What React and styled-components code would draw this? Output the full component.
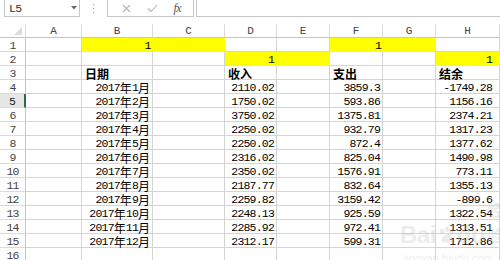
import React from 'react';
import styled, { createGlobalStyle } from 'styled-components';

const Global = createGlobalStyle`
  html, body { margin: 0; padding: 0; background: #fff; }
  body {
    width: 500px; height: 260px; overflow: hidden;
    font-family: "Liberation Mono", "Noto Sans CJK SC", monospace;
  }
`;

const Page = styled.div`
  position: relative;
  width: 500px;
  height: 260px;
  overflow: hidden;
  background: #fff;
`;

const FormulaBar = styled.div`
  display: flex;
  align-items: stretch;
  height: 17px;
`;

const NameBox = styled.div`
  box-sizing: border-box;
  margin-left: 4px;
  width: 76px;
  border: 1px solid #c6c6c6;
  border-top: none;
  display: flex;
  align-items: center;
  justify-content: space-between;
  padding: 0 2px 0 4px;
  font-size: 11.5px;
  letter-spacing: -0.6px;
  color: #333;
`;

const Grip = styled.div`
  width: 27px;
  display: flex;
  align-items: center;
  justify-content: center;
`;

const FuncBox = styled.div`
  box-sizing: border-box;
  width: 87px;
  border: 1px solid #c6c6c6;
  border-top: none;
  display: flex;
  align-items: center;
  justify-content: space-around;
  padding: 0 4px 0 6px;
`;

const Fx = styled.span`
  font-family: "Liberation Serif", serif;
  font-style: italic;
  font-size: 12px;
  color: #555;
  letter-spacing: -0.5px;
`;

const FormulaInput = styled.div`
  box-sizing: border-box;
  flex: 1;
  margin-left: 2px;
  border: 1px solid #c6c6c6;
  border-top: none;
  border-right: none;
`;

const Sheet = styled.div`
  margin-top: 7px;
  display: grid;
  grid-template-columns: 26px 56px 71px 72px 52px 53px 53px 53px 64px;
  grid-auto-rows: 14px;
`;

const ColHead = styled.div`
  box-sizing: border-box;
  border-right: 1px solid #dadada;
  border-bottom: 1px solid #c4c4c4;
  display: flex;
  align-items: center;
  justify-content: center;
  font-size: 11px;
  color: #444;
  padding-top: 1px;
`;

const Corner = styled(ColHead)`
  justify-content: flex-end;
  align-items: flex-end;
  padding: 0 3px 2px 0;
`;

const RowHead = styled.div`
  box-sizing: border-box;
  border-right: ${p => (p.$active ? '2px solid #217346' : '1px solid #c4c4c4')};
  border-bottom: 1px solid #dadada;
  background: ${p => (p.$active ? '#e6e6e6' : '#fff')};
  display: flex;
  align-items: center;
  justify-content: center;
  font-size: 11.5px;
  letter-spacing: -0.8px;
  color: ${p => (p.$active ? '#222' : '#444')};
  padding-top: 2px;
`;

const Cell = styled.div`
  box-sizing: border-box;
  grid-column: span ${p => p.$span || 1};
  border-right: 1px solid ${p => p.$fill || '#d4d4d4'};
  border-bottom: 1px solid ${p => p.$fill || '#d4d4d4'};
  background: ${p => p.$fill || '#fff'};
  display: flex;
  align-items: center;
  justify-content: ${p =>
    p.$align === 'right' ? 'flex-end' : p.$align === 'center' ? 'center' : 'flex-start'};
  padding: 2px ${p => p.$pr ?? 2}px 0 3px;
  font-size: 11.5px;
  letter-spacing: -0.8px;
  font-weight: ${p => (p.$bold ? 700 : 400)};
  color: #000;
  white-space: nowrap;
  line-height: 12px;
`;

const Han = styled.span`
  font-family: "Noto Sans CJK SC", sans-serif;
  font-size: 12px;
  letter-spacing: 0;
  line-height: 12px;
`;

const Watermark = styled.div`
  position: absolute;
  left: 400px;
  top: 196px;
  color: rgba(170, 170, 170, 0.22);
  font-family: "Liberation Sans", sans-serif;
  pointer-events: none;
`;

const WmTop = styled.div`
  display: flex;
  align-items: flex-end;
  font-size: 24px;
  font-weight: 700;
  line-height: 26px;
  letter-spacing: -0.5px;
`;

const WmHan = styled.span`
  font-family: "Noto Sans CJK SC", sans-serif;
  font-size: 16px;
  font-weight: 700;
  margin-left: 2px;
`;

const WmUrl = styled.div`
  font-size: 11px;
  margin-top: 4px;
  margin-left: 4px;
`;

const withHan = text =>
  String(text)
    .split(/([\u4e00-\u9fff]+)/)
    .filter(Boolean)
    .map((part, i) =>
      /[\u4e00-\u9fff]/.test(part) ? <Han key={i}>{part}</Han> : <span key={i}>{part}</span>
    );

const Y = '#ffff00';

const income = ['2110.02', '1750.02', '3750.02', '2250.02', '2250.02', '2316.02', '2350.02', '2187.77', '2259.82', '2248.13', '2285.92', '2312.17'];
const expense = ['3859.3', '593.86', '1375.81', '932.79', '872.4', '825.04', '1576.91', '832.64', '3159.42', '925.59', '972.41', '599.31'];
const balance = ['-1749.28', '1156.16', '2374.21', '1317.23', '1377.62', '1490.98', '773.11', '1355.13', '-899.6', '1322.54', '1313.51', '1712.86'];

const E = {};
const rows = [
  [E, { v: '1', align: 'center', fill: Y, span: 2, pr: 14 }, E, E, { v: '1', align: 'center', fill: Y, span: 2, pr: 12 }, { pr: 7 }],
  [E, E, E, { v: '1', align: 'right', fill: Y }, { fill: Y }, E, E, { v: '1', align: 'right', fill: Y, pr: 7 }],
  [E, { v: '日期', bold: true }, E, { v: '收入', bold: true }, E, { v: '支出', bold: true }, E, { v: '结余', bold: true }],
  ...income.map((inc, i) => [
    E,
    { v: `2017年${i + 1}月`, align: 'right' },
    E,
    { v: inc, align: 'right' },
    E,
    { v: expense[i], align: 'right' },
    E,
    { v: balance[i], align: 'right', pr: 7 },
  ]),
  [E, E, E, E, E, E, E, E],
];

const cols = ['A', 'B', 'C', 'D', 'E', 'F', 'G', 'H'];

export default function App() {
  return (
    <Page>
      <Global />
      <FormulaBar>
        <NameBox>
          <span>L5</span>
          <svg width="6" height="4" viewBox="0 0 6 4">
            <path d="M0 0 L6 0 L3 3.5 Z" fill="#666" />
          </svg>
        </NameBox>
        <Grip>
          <svg width="2" height="10" viewBox="0 0 2 10">
            <rect x="0" y="0" width="1.2" height="1.2" fill="#aaa" />
            <rect x="0" y="4" width="1.2" height="1.2" fill="#aaa" />
            <rect x="0" y="8" width="1.2" height="1.2" fill="#aaa" />
          </svg>
        </Grip>
        <FuncBox>
          <svg width="9" height="9" viewBox="0 0 9 9">
            <path d="M1 1 L8 8 M8 1 L1 8" stroke="#b4b4b4" strokeWidth="1.1" fill="none" />
          </svg>
          <svg width="11" height="9" viewBox="0 0 11 9">
            <path d="M1 4.5 L4 7.5 L10 1" stroke="#b4b4b4" strokeWidth="1.1" fill="none" />
          </svg>
          <Fx>fx</Fx>
        </FuncBox>
        <FormulaInput />
      </FormulaBar>
      <Sheet>
        <Corner>
          <svg width="8" height="8" viewBox="0 0 8 8">
            <path d="M8 0 L8 8 L0 8 Z" fill="#dcdcdc" />
          </svg>
        </Corner>
        {cols.map(c => (
          <ColHead key={c}>{c}</ColHead>
        ))}
        {rows.map((row, r) => (
          <React.Fragment key={r}>
            <RowHead $active={r === 4}>{r + 1}</RowHead>
            {row.map((c, i) => (
              <Cell
                key={i}
                $align={c.align}
                $fill={c.fill}
                $span={c.span}
                $bold={c.bold}
                $pr={c.pr}
              >
                {c.v ? withHan(c.v) : null}
              </Cell>
            ))}
          </React.Fragment>
        ))}
      </Sheet>
      <Watermark>
        <WmTop>
          <span>Bai</span>
          <svg width="26" height="26" viewBox="0 0 26 26" style={{ margin: '0 1px' }}>
            <g fill="rgba(170,170,170,0.22)">
              <ellipse cx="7" cy="8" rx="3" ry="4" />
              <ellipse cx="14" cy="5" rx="3" ry="4" />
              <ellipse cx="21" cy="9" rx="3" ry="4" />
              <path d="M6 22 C6 15 11 12 14 12 C18 12 22 16 22 22 C18 24 10 24 6 22 Z" />
            </g>
          </svg>
          <span>du</span>
          <WmHan>经验</WmHan>
        </WmTop>
        <WmUrl>jingyan.baidu.com</WmUrl>
      </Watermark>
    </Page>
  );
}
